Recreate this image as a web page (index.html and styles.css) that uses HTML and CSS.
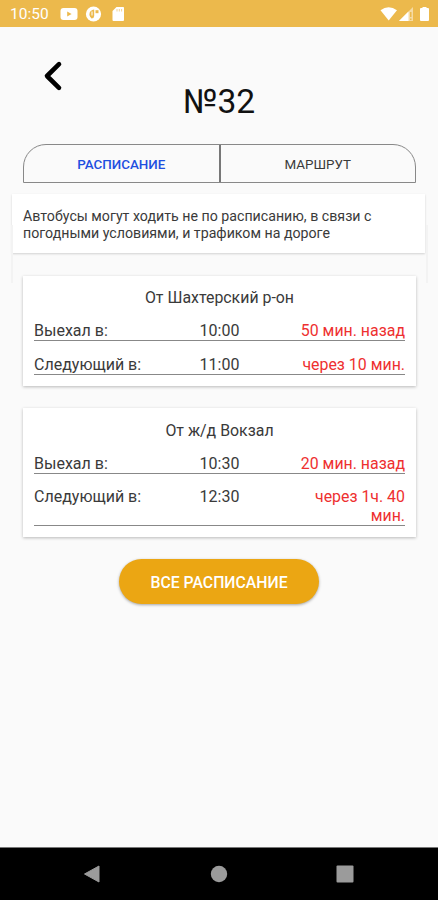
FILE: index.html
```html
<!DOCTYPE html>
<html lang="ru">
<head>
<meta charset="utf-8">
<title>№32</title>
<link rel="stylesheet" href="styles.css">
</head>
<body>
<div class="status">
  <span class="clock">10:50</span>
  <svg class="notifications" width="66" height="16" viewBox="0 0 66 16">
    <rect x="0.5" y="2" width="17" height="12" rx="3" fill="#fff"/>
    <path d="M7.2 5.4v5.2L11.6 8z" fill="#ecb94c"/>
    <circle cx="33.500" cy="8" r="7.600" fill="#fff"/>
    <path d="M34.200 3.500A4.800 4.800 0 0 0 30 10.500L31.500 12.500Q34 12.500 34.200 10z" fill="#ecb94c"/>
    <path d="M32 5.500v4" stroke="#fff" stroke-width="1"/>
    <path d="M35.500 4.200h3v3h-3z" fill="#ecb94c"/>
    <path d="M56.500 1H63.300Q64 1 64 1.900V14Q64 15 63 15H53.500Q52.500 15 52.500 14V5z" fill="#fff"/>
    <path d="M57 3v2.500M59.300 3v2.500M61.600 3v2.500" stroke="#f3d391" stroke-width="1"/>
  </svg>
  <svg class="signals" width="50" height="16" viewBox="0 0 50 16">
    <path d="M0.500 4.300Q8.500-2 17 4.300L8.700 14.500z" fill="#fff"/>
    <path d="M19 15L33 1V15z" fill="#f5dba4"/>
    <path d="M19 15L28.500 5.500V15z" fill="#fff"/>
    <path d="M30 6h1.500v5H30zM30 12.500h1.500V14H30z" fill="#ecb94c"/>
    <path d="M42.500 2V1h4v1H48Q49 2 49 3V14Q49 15 48 15H41Q40 15 40 14V3Q40 2 41 2z" fill="#fff"/>
  </svg>
</div>
<main class="screen">
  <header class="header">
    <svg class="back" width="20" height="32" viewBox="0 0 20 32"><path d="M16 4.200L4 16L16 27.800" fill="none" stroke="#000" stroke-width="4.600" stroke-linecap="round" stroke-linejoin="round"/></svg>
    <h1 class="title">№32</h1>
  </header>
  <nav class="tabs">
    <div class="tab tab-active">РАСПИСАНИЕ</div>
    <div class="tab">МАРШРУТ</div>
  </nav>
  <div class="notice">Автобусы могут ходить не по расписанию, в связи с<br>погодными условиями, и трафиком на дороге</div>
  <div class="edge"></div>
  <section class="card">
    <h2 class="card-title">От Шахтерский р-он</h2>
    <div class="row"><span>Выехал в:</span><span class="time">10:00</span><span class="eta">50 мин. назад</span></div>
    <div class="row"><span>Следующий в:</span><span class="time">11:00</span><span class="eta">через 10 мин.</span></div>
  </section>
  <section class="card card-low">
    <h2 class="card-title">От ж/д Вокзал</h2>
    <div class="row"><span>Выехал в:</span><span class="time">10:30</span><span class="eta">20 мин. назад</span></div>
    <div class="row row-tall"><span>Следующий в:</span><span class="time">12:30</span><span class="eta">через 1ч. 40 мин.</span></div>
  </section>
  <button class="all">ВСЕ РАСПИСАНИЕ</button>
</main>
<footer class="navbar">
  <svg width="18" height="20" viewBox="0 0 18 20"><path d="M1.500 10L16 2V18z" fill="#9b9b9b" stroke="#9b9b9b" stroke-linejoin="round"/></svg>
  <svg width="18" height="20" viewBox="0 0 18 20"><circle cx="9" cy="10" r="8.200" fill="#9b9b9b"/></svg>
  <svg width="18" height="20" viewBox="0 0 18 20"><rect x="0.500" y="1.500" width="17" height="17" rx="1" fill="#9b9b9b"/></svg>
</footer>
</body>
</html>
```
FILE: styles.css
```css
* { box-sizing: border-box; }
body {
  margin: 0;
  height: 900px;
  display: flex;
  flex-direction: column;
  background: #fafafa;
  color: #3a3a3a;
  font-family: Roboto, "Liberation Sans", sans-serif;
  overflow: hidden;
}
.status {
  height: 27px;
  padding: 0 8px 0 10px;
  display: flex;
  align-items: center;
  background: #ecb94c;
  color: #fff;
}
.clock { width: 50px; padding-top: 1px; font-size: 15.500px; line-height: 28px; }
.signals { margin-left: auto; }
.screen {
  flex: 1;
  display: flex;
  flex-direction: column;
}
.header {
  height: 117px;
  display: grid;
  grid-template-columns: 44px 1fr 44px;
  align-items: start;
}
.back { margin: 33px 0 0 42.500px; }
.title {
  margin: 55px 0 0;
  text-align: center;
  font-size: 33.600px;
  line-height: 40px;
  font-weight: 400;
  color: #111;
}
.tabs {
  display: grid;
  grid-template-columns: 194.500px 1fr;
  height: 39px;
  margin: 0 22px 0 23px;
  border: 1px solid #888;
  border-radius: 23px 23px 0 0;
}
.tab {
  height: 37px;
  text-align: center;
  font-size: 13.400px;
  line-height: 39px;
}
.tab + .tab { border-left: 2px solid #777; }
.tab-active { color: #1f4fe0; font-weight: 500; }
.notice {
  height: 59px;
  margin: 11px 13px 0 12px;
  padding: 14px 11px 11px;
  background: #fff;
  box-shadow: 0 1px 2px rgba(0, 0, 0, 0.16);
  font-size: 14.200px;
  line-height: 17px;
  white-space: nowrap;
}
.edge {
  height: 58px;
  margin: -28px 10px -7px 11px;
  border: solid #f3f3f3;
  border-width: 0 2px;
}
.card {
  margin: 0 22px 22px 23px;
  padding: 12px 11px 11px;
  background: #fff;
  box-shadow: 0 1px 3px rgba(0, 0, 0, 0.26);
  font-size: 16px;
  line-height: 19px;
}
.card-low { padding-top: 13px; }
.card-title {
  margin: 0 0 14px;
  text-align: center;
  font-size: 15.900px;
  font-weight: 400;
}
.row {
  display: grid;
  grid-template-columns: 1fr 1fr 1fr;
  border-bottom: 1px solid #888;
}
.row + .row { margin-top: 14px; }
.row-tall { line-height: 18.500px; }
.time { text-align: center; }
.eta { text-align: right; color: #ee3030; font-size: 15.900px; }
.all {
  align-self: center;
  width: 200px;
  height: 45px;
  padding: 2px 0 0;
  border: 0;
  border-radius: 23px;
  background: #eba613;
  box-shadow: 0 1px 3px rgba(0, 0, 0, 0.35);
  color: #fff;
  font: 500 15.800px/43px Roboto, "Liberation Sans", sans-serif;
}
.navbar {
  height: 53px;
  padding: 0 84px 0 83px;
  display: flex;
  align-items: center;
  justify-content: space-between;
  background: #000;
  border-top: 1px solid #777;
}
```
